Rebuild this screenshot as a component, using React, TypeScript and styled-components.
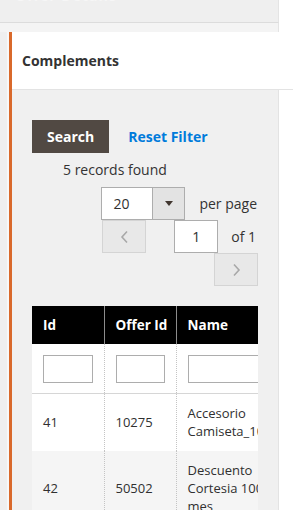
import React from "react";
import styled, { createGlobalStyle } from "styled-components";

/* ─── Global ─── */

const GlobalStyle = createGlobalStyle`
  html, body {
    margin: 0;
    padding: 0;
    background: #ffffff;
  }
  body {
    font-family: "Open Sans", "Liberation Sans", Arial, sans-serif;
    color: #303030;
    -webkit-font-smoothing: antialiased;
  }
  * { box-sizing: border-box; }
`;

/* ─── Styled Components ─── */

const Root = styled.div`
  width: 293px;
  height: 510px;
  overflow: hidden;
  background: #ffffff;
`;

const TopBar = styled.div`
  width: 279px;
  height: 23px;
  overflow: hidden;
  background: #efefef;
  border-right: 1px solid #e4e4e4;
  border-bottom: 1px solid #dcdcdc;
  padding-left: 15px;
`;

const FaintTitle = styled.div`
  margin-top: -13px;
  font-size: 14px;
  font-weight: 700;
  line-height: 18px;
  color: #f6f6f6;
  letter-spacing: 1px;
`;

const TopGap = styled.div`
  width: 279px;
  height: 9px;
  background: #f4f4f4;
  border-right: 1px solid #e4e4e4;
`;

const Gutter = styled.div`
  padding-left: 9px;
  background: linear-gradient(
    to right,
    #efefef 0 7px,
    #f8f8f8 7px 9px,
    #ffffff 9px
  );
`;

const Panel = styled.section`
  border-left: 3px solid #d9692b;
`;

const Header = styled.div`
  height: 58px;
  display: flex;
  align-items: center;
  padding-left: 10px;
  background: #ffffff;
  border-bottom: 1px solid #e3e3e3;
`;

const Title = styled.h2`
  margin: 0;
  font-size: 14px;
  font-weight: 700;
  color: #333333;
`;

const Body = styled.div`
  width: 267px;
  background: #f0f0f0;
  border-right: 1px solid #e3e3e3;
  padding: 30px 20px 0;
`;

const ActionRow = styled.div`
  display: flex;
  align-items: center;
  gap: 19px;
`;

const SearchButton = styled.button`
  height: 33px;
  padding: 0 15px;
  border: none;
  background: #514943;
  color: #ffffff;
  font-family: inherit;
  font-size: 14px;
  font-weight: 700;
  cursor: pointer;
`;

const LinkButton = styled.button`
  padding: 0;
  border: none;
  background: none;
  color: #007bdb;
  font-family: inherit;
  font-size: 14px;
  font-weight: 700;
  cursor: pointer;
`;

const RecordsText = styled.div`
  margin-top: 8px;
  padding-left: 31px;
  font-size: 14px;
  line-height: 18px;
  color: #333333;
`;

const PagerRow = styled.div<{ $gap?: number; $top?: number }>`
  display: flex;
  justify-content: flex-end;
  align-items: center;
  gap: ${({ $gap }) => $gap ?? 0}px;
  margin-top: ${({ $top }) => $top ?? 0}px;
`;

const SelectBox = styled.div`
  display: flex;
  height: 33px;
`;

const SelectValue = styled.div`
  width: 51px;
  background: #ffffff;
  border: 1px solid #adadad;
  border-right: none;
  padding-left: 11px;
  font-size: 14px;
  line-height: 31px;
  color: #303030;
`;

const SelectArrow = styled.div`
  width: 33px;
  background: #e3e3e3;
  border: 1px solid #adadad;
  display: flex;
  align-items: center;
  justify-content: center;

  &::after {
    content: "";
    border-left: 4px solid transparent;
    border-right: 4px solid transparent;
    border-top: 5px solid #41362f;
  }
`;

const PagerLabel = styled.span<{ $left?: number; $right?: number }>`
  font-size: 14px;
  color: #333333;
  margin-left: ${({ $left }) => $left ?? 0}px;
  margin-right: ${({ $right }) => $right ?? 0}px;
`;

const NavButton = styled.button<{ $right?: number }>`
  width: 44px;
  height: 33px;
  margin-right: ${({ $right }) => $right ?? 0}px;
  padding: 0;
  background: #e8e8e8;
  border: 1px solid #d4d4d4;
  display: flex;
  align-items: center;
  justify-content: center;
  color: #a8a8a8;
`;

const PageInput = styled.div`
  width: 44px;
  height: 33px;
  background: #ffffff;
  border: 1px solid #adadad;
  font-size: 14px;
  line-height: 31px;
  text-align: center;
  color: #303030;
`;

const TableWrap = styled.div`
  width: 226px;
  margin-top: 20px;
  overflow: hidden;
`;

const Table = styled.table`
  border-collapse: collapse;
  table-layout: fixed;
  width: 258px;
  font-size: 13px;
`;

const Th = styled.th<{ $w: number }>`
  width: ${({ $w }) => $w}px;
  height: 38px;
  padding: 0 11px;
  background: #000000;
  color: #ffffff;
  font-size: 13.5px;
  font-weight: 700;
  text-align: left;
  white-space: nowrap;
  border-left: 1px solid #8c8c8c;

  &:first-child {
    border-left: none;
  }
`;

const FilterRow = styled.tr`
  background: #ffffff;
  border-bottom: 1px solid #d6d6d6;
`;

const FilterCell = styled.td`
  padding: 11px 11px 10px;
  border-left: 1px dotted #c4c4c4;

  &:first-child {
    border-left: none;
  }
`;

const FilterInput = styled.input`
  display: block;
  width: 100%;
  height: 28px;
  border: 1px solid #adadad;
  background: #ffffff;
  padding: 0 6px;
  font-family: inherit;
  font-size: 13px;
`;

const Row = styled.tr<{ $alt: boolean }>`
  background: ${({ $alt }) => ($alt ? "#f5f5f5" : "#ffffff")};
`;

const Td = styled.td`
  padding: 10px 11px 11px;
  line-height: 18px;
  vertical-align: middle;
  color: #303030;
  border-left: 1px dotted #c4c4c4;
  white-space: normal;

  &:first-child {
    border-left: none;
  }
`;

/* ─── Data ─── */

const rows = [
  { id: 41, offer: 10275, name: "Accesorio Camiseta_10275" },
  { id: 42, offer: 50502, name: "Descuento Cortesia 100 mes" },
];

const ChevronLeft = () => (
  <svg width="9" height="14" viewBox="0 0 9 14" fill="none">
    <path d="M7 1.5L2 7l5 5.5" stroke="currentColor" strokeWidth="1.6" />
  </svg>
);

const ChevronRight = () => (
  <svg width="9" height="14" viewBox="0 0 9 14" fill="none">
    <path d="M2 1.5L7 7l-5 5.5" stroke="currentColor" strokeWidth="1.6" />
  </svg>
);

/* ─── Component ─── */

export default function App() {
  return (
    <Root>
      <GlobalStyle />
      <TopBar>
        <FaintTitle>Offer Details</FaintTitle>
      </TopBar>
      <TopGap />
      <Gutter>
        <Panel>
          <Header>
            <Title>Complements</Title>
          </Header>
          <Body>
            <ActionRow>
              <SearchButton>Search</SearchButton>
              <LinkButton>Reset Filter</LinkButton>
            </ActionRow>
            <RecordsText>5 records found</RecordsText>

            <PagerRow $gap={14} $top={8}>
              <SelectBox>
                <SelectValue>20</SelectValue>
                <SelectArrow />
              </SelectBox>
              <PagerLabel $right={1}>per page</PagerLabel>
            </PagerRow>
            <PagerRow>
              <NavButton $right={28} aria-label="Previous page">
                <ChevronLeft />
              </NavButton>
              <PageInput>1</PageInput>
              <PagerLabel $left={13} $right={2}>
                of 1
              </PagerLabel>
            </PagerRow>
            <PagerRow>
              <NavButton aria-label="Next page">
                <ChevronRight />
              </NavButton>
            </PagerRow>

            <TableWrap>
              <Table>
                <thead>
                  <tr>
                    <Th $w={72}>Id</Th>
                    <Th $w={72}>Offer Id</Th>
                    <Th $w={114}>Name</Th>
                  </tr>
                </thead>
                <tbody>
                  <FilterRow>
                    <FilterCell><FilterInput /></FilterCell>
                    <FilterCell><FilterInput /></FilterCell>
                    <FilterCell><FilterInput /></FilterCell>
                  </FilterRow>
                  {rows.map((r, i) => (
                    <Row key={r.id} $alt={i % 2 === 1}>
                      <Td>{r.id}</Td>
                      <Td>{r.offer}</Td>
                      <Td>{r.name}</Td>
                    </Row>
                  ))}
                </tbody>
              </Table>
            </TableWrap>
          </Body>
        </Panel>
      </Gutter>
    </Root>
  );
}
